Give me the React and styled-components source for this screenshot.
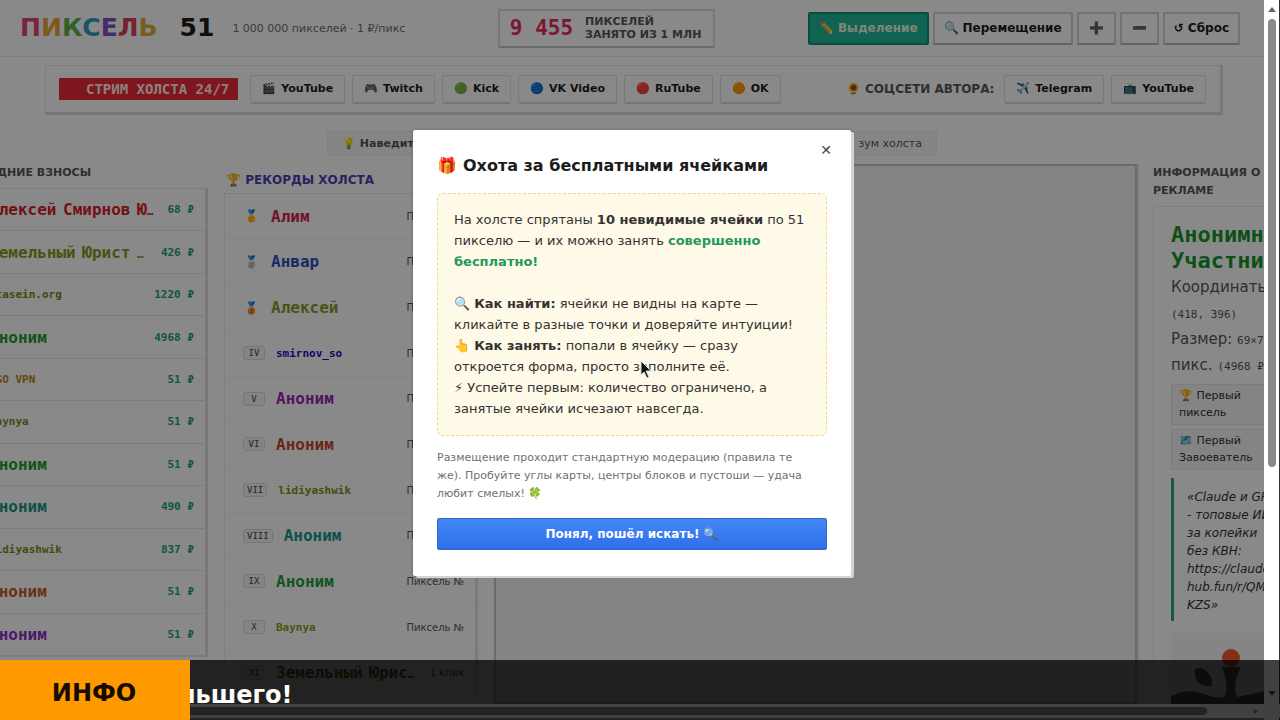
import React from "react";
import styled, { createGlobalStyle, css } from "styled-components";

const sans = '"DejaVu Sans", sans-serif';
const mono = '"DejaVu Sans Mono", monospace';

const GlobalStyle = createGlobalStyle`
  * { box-sizing: border-box; }
  body { margin: 0; font-family: ${sans}; color: #1c1c1c; background: #fafafa; }
  button, input { font-family: inherit; }
  h1, h2, h3, p, ul, ol { margin: 0; padding: 0; }
  ul, ol { list-style: none; }
`;

const Shell = styled.div`
  position: relative;
  display: flex;
  height: 100vh;
  overflow: hidden;
`;

const Page = styled.div`
  flex: 1;
  min-width: 0;
  height: 100%;
  overflow: hidden;
  background: #fafafa;
`;

/* ---------- header ---------- */
const Header = styled.header`
  display: flex;
  align-items: center;
  justify-content: space-between;
  height: 57px;
  padding: 0 24px 0 20px;
  border-bottom: 1px solid #e4e4e4;
`;
const Brand = styled.div`
  display: flex;
  align-items: center;
  gap: 18px;
  white-space: nowrap;
`;
const Logo = styled.h1`
  display: flex;
  gap: 22px;
  font-size: 25px;
  line-height: 30px;
  font-weight: 700;
`;
const Letter = styled.span`
  color: ${(p) => p.$color};
`;
const Tagline = styled.span`
  font-size: 11px;
  color: #6b6b6b;
`;
const Counter = styled.div`
  display: flex;
  align-items: center;
  gap: 12px;
  height: 39px;
  padding: 0 12px 0 10px;
  border: 2px solid #dadada;
  border-bottom-color: #c4c4c4;
  font-size: 11px;
  font-weight: 700;
  line-height: 13px;
  color: #555;
  white-space: nowrap;
`;
const CounterValue = styled.strong`
  font-family: ${mono};
  font-size: 21px;
  color: #e02b5c;
`;
const Tools = styled.div`
  display: flex;
  justify-content: flex-end;
  gap: 4px;
`;
const ToolButton = styled.button`
  display: flex;
  align-items: center;
  justify-content: center;
  gap: 4px;
  height: 33px;
  min-width: 39px;
  padding: 0 9px;
  border: 2px solid #cfcfcf;
  border-bottom-color: #b5b5b5;
  border-radius: 2px;
  background: #fafafa;
  color: #1c1c1c;
  font-size: 12px;
  font-weight: 700;
  white-space: nowrap;
  ${(p) =>
    p.$active &&
    css`
      background: #1fb594;
      border-color: #178a70;
      color: #e8f4dc;
    `}
`;

/* ---------- stream bar ---------- */
const StreamBar = styled.nav`
  display: flex;
  align-items: center;
  justify-content: space-between;
  height: 50px;
  margin: 8px 41px 0 45px;
  padding: 0 14px 0 13px;
  border: 1px solid #e6e6e6;
  border-right: 3px solid #dcdcdc;
  border-bottom: 3px solid #d4d4d4;
  white-space: nowrap;
`;
const LinkGroup = styled.div`
  display: flex;
  align-items: center;
  gap: 7px;
`;
const LiveBadge = styled.span`
  margin-right: 5px;
  padding: 0 9px 0 27px;
  background: #e62a35;
  color: #ffe9e4;
  font-family: ${mono};
  font-size: 14px;
  font-weight: 700;
  line-height: 22px;
`;
const ChipLink = styled.a`
  display: flex;
  align-items: center;
  gap: 5px;
  height: 29px;
  padding: 0 11px;
  border: 1px solid #dedede;
  border-bottom: 2px solid #d6d6d6;
  border-radius: 2px;
  color: #1c1c1c;
  font-size: 11px;
  font-weight: 700;
  text-decoration: none;
`;
const SocialLabel = styled.span`
  display: flex;
  align-items: center;
  gap: 4px;
  margin-right: 3px;
  font-size: 12px;
  font-weight: 700;
  color: #555;
`;

const Hint = styled.p`
  display: flex;
  align-items: center;
  justify-content: space-between;
  width: 610px;
  height: 25px;
  margin: 16px auto 0;
  padding: 0 14px 0 14px;
  border: 1px solid #ececec;
  background: #f3f3f3;
  font-size: 11px;
  color: #555;
`;

/* ---------- columns ---------- */
const Columns = styled.main`
  display: grid;
  grid-template-columns: 254px 254px 1fr 254px;
  align-items: start;
  gap: 16px;
  margin: 8px -143px 0 -46px;
`;
const ColumnTitle = styled.h2`
  padding: 0 0 6px;
  font-size: 11px;
  line-height: 18px;
  font-weight: 700;
  color: #555;
  white-space: pre-line;
`;
const RecordsTitle = styled(ColumnTitle)`
  padding: 7px 0 4px 2px;
  font-size: 12px;
  color: #4a3fb0;
`;
const Donations = styled.ul`
  display: grid;
  grid-auto-rows: 1fr;
  height: 469px;
  border: 1px solid #e6e6e6;
  border-right: 3px solid #dadada;
`;
const DonationRow = styled.li`
  display: flex;
  align-items: center;
  justify-content: space-between;
  padding: 0 11px 0 34px;
  border-bottom: 1px solid #e2e2e2;
  white-space: nowrap;
`;
const NameText = styled.span`
  font-family: ${mono};
  font-size: 11px;
  font-weight: 700;
  color: ${(p) => p.$color};
`;
const Cyrillic = styled.span`
  font-size: 16px;
`;
const Price = styled.span`
  font-family: ${mono};
  font-size: 11px;
  font-weight: 700;
  color: #1b9a84;
`;
const Records = styled.ol`
  display: grid;
  grid-template-columns: minmax(0, 1fr);
  grid-auto-rows: 1fr;
  height: 504px;
  border: 1px solid #e8e8e8;
  border-right: 3px solid #dedede;
`;
const RecordRow = styled.li`
  display: flex;
  align-items: center;
  padding: 0 11px 0 18px;
  border-bottom: 1px solid #f0f0f0;
  white-space: nowrap;
`;
const Medal = styled.span`
  display: flex;
  justify-content: center;
  width: 16px;
  margin-right: 12px;
  font-size: 12px;
`;
const Rank = styled.span`
  min-width: 22px;
  margin-right: 11px;
  padding: 0 3px;
  border: 1px solid #d8d8d8;
  border-radius: 3px;
  background: #f0f0f0;
  font-family: ${mono};
  font-size: 9px;
  line-height: 12px;
  text-align: center;
  color: #444;
`;
const Caption = styled.span`
  margin-left: auto;
  font-size: 10px;
  color: #555;
`;
const Canvas = styled.section`
  height: 540px;
  border: 2px solid #c2c2c2;
  background: #f0f0f0;
  box-shadow: 2px 0 0 #e0e0e0;
`;
const Info = styled.section`
  height: 506px;
  padding: 15px 17px 0;
  border: 1px solid #e6e6e6;
  overflow: hidden;
`;
const Member = styled.h3`
  font-family: ${mono};
  font-size: 22px;
  line-height: 26px;
  color: #17912a;
`;
const Facts = styled.div`
  margin-bottom: 6px;
  font-size: 15px;
  color: #555;
  white-space: nowrap;
`;
const Fact = styled.p`
  height: 26px;
  line-height: 26px;
`;
const MonoText = styled.span`
  font-family: ${mono};
  font-size: 11px;
`;
const Award = styled.div`
  width: 160px;
  height: 41px;
  margin-bottom: 4px;
  padding: 2px 7px;
  border: 1px solid #e2e2e2;
  background: #f0f0f0;
  font-size: 11px;
  line-height: 17px;
  color: #333;
`;
const Quote = styled.blockquote`
  margin: 8px 0 12px;
  padding: 10px 0 7px 13px;
  border-left: 3px solid #23a583;
  font-size: 12px;
  font-style: italic;
  line-height: 18px;
  color: #333;
  white-space: pre;
`;
const Plant = styled.svg`
  display: block;
  width: 100%;
  height: 72px;
  background: #f2f2f2;
`;

/* ---------- scroll rails ---------- */
const Rail = styled.div`
  display: flex;
  flex-direction: column;
  align-items: center;
  width: 16px;
  padding: 7px 0 24px;
  border-right: 1px solid #333;
  background: #fff;
`;
const RailThumb = styled.div`
  width: 8px;
  height: 65%;
  margin: 7px 0 auto;
  border-radius: 4px;
  background: #8a8a8a;
`;
const Arrow = styled.svg`
  flex: none;
  width: 8px;
  height: 5px;
  fill: ${(p) => p.$color || "#666"};
`;

/* ---------- modal ---------- */
const Backdrop = styled.div`
  position: absolute;
  inset: 0 16px 0 0;
  display: flex;
  align-items: flex-start;
  justify-content: center;
  padding-top: 130px;
  background: rgba(0, 0, 0, 0.45);
`;
const Dialog = styled.section`
  position: relative;
  width: 438px;
  padding: 24px 24px 26px;
  background: #fff;
  border-radius: 2px;
  box-shadow: 3px 2px 0 #d4d4d4, 0 0 3px rgba(0, 0, 0, 0.3);
`;
const CloseButton = styled.button`
  position: absolute;
  top: 10px;
  right: 15px;
  width: 20px;
  height: 20px;
  padding: 0;
  border: 0;
  background: none;
  font-size: 14px;
  line-height: 20px;
  color: #444;
`;
const DialogTitle = styled.h2`
  display: flex;
  align-items: center;
  gap: 6px;
  margin-bottom: 15px;
  font-size: 16px;
  line-height: 24px;
  white-space: nowrap;
`;
const Notice = styled.div`
  margin-bottom: 13px;
  padding: 15px 16px 16px;
  border: 1px dashed #f0d690;
  border-radius: 6px;
  background: #fff9e8;
  font-size: 13px;
  line-height: 21px;
  color: #333;
  white-space: nowrap;
`;
const Free = styled.strong`
  color: #1f9a59;
`;
const SmallPrint = styled.p`
  margin-bottom: 15px;
  font-size: 11px;
  line-height: 18px;
  color: #707070;
  white-space: nowrap;
`;
const ConfirmButton = styled.button`
  display: flex;
  align-items: center;
  justify-content: center;
  gap: 4px;
  width: 100%;
  height: 32px;
  border: 1px solid #3567c9;
  border-radius: 2px;
  background: linear-gradient(#4487f6, #2f6fe9);
  color: #fff;
  font-size: 12px;
  font-weight: 700;
`;

/* ---------- ticker ---------- */
const Ticker = styled.footer`
  position: absolute;
  inset: auto 0 0 0;
  display: flex;
  height: 60px;
  background: rgba(0, 0, 0, 0.75);
`;
const TickerLabel = styled.strong`
  z-index: 1;
  display: flex;
  flex: none;
  align-items: center;
  justify-content: center;
  width: 190px;
  padding: 6px 2px 0 0;
  background: #ff9900;
  color: #140c00;
  font-size: 24px;
`;
const TickerBody = styled.div`
  flex: 1;
  overflow: hidden;
`;
const TickerText = styled.p`
  height: 44px;
  margin-left: -12px;
  padding-top: 18px;
  color: #fff;
  font-size: 24px;
  font-weight: 700;
  line-height: 34px;
`;
const HorizontalRail = styled.div`
  display: flex;
  align-items: center;
  justify-content: space-between;
  height: 14px;
  padding-right: 20px;
  background: #414141;
`;
const HorizontalThumb = styled.div`
  width: 95%;
  height: 8px;
  border-radius: 0 4px 4px 0;
  background: #232323;
`;
const Pointer = styled.svg`
  position: absolute;
  left: 50%;
  top: 50%;
  width: 12px;
  height: 19px;
`;

const logoLetters = [
  ["П", "#e0407a"], ["И", "#e8a035"], ["К", "#5cae48"], ["С", "#2f9db8"],
  ["Е", "#8052c0"], ["Л", "#dc3a5c"], ["Ь", "#d6ae38"],
];
const streams = [
  ["🎬", "YouTube"], ["🎮", "Twitch"], ["🟢", "Kick"],
  ["🔵", "VK Video"], ["🔴", "RuTube"], ["🟠", "OK"],
];
const socials = [["✈️", "Telegram"], ["📺", "YouTube"]];
const donations = [
  ["Алексей Смирнов Ю…", "68 ₽", "#d0212a"],
  ["Земельный Юрист …", "426 ₽", "#7d9a24"],
  ["stasein.org", "1220 ₽", "#6f8a10"],
  ["Аноним", "4968 ₽", "#1c9a2c"],
  ["OGO VPN", "51 ₽", "#b8801c"],
  ["Baynya", "51 ₽", "#7f8a18"],
  ["Аноним", "51 ₽", "#1c9a2c"],
  ["Аноним", "490 ₽", "#16947c"],
  ["lidiyashwik", "837 ₽", "#7f8a18"],
  ["Аноним", "51 ₽", "#c0592a"],
  ["Аноним", "51 ₽", "#8a2cc4"],
];
const records = [
  ["🥇", "Алим", "#cf2146"], ["🥈", "Анвар", "#2f4bbd"], ["🥉", "Алексей", "#829a2c"],
  ["IV", "smirnov_so", "#1c10c0"], ["V", "Аноним", "#9a24b4"],
  ["VI", "Аноним", "#c0492a"], ["VII", "lidiyashwik", "#7f8a18"],
  ["VIII", "Аноним", "#16948c"], ["IX", "Аноним", "#1c9a3c"],
  ["X", "Baynya", "#8a9a10"], ["XI", "Земельный Юрис…", "#4c6a20", "1 клик"],
];

const Emoji = ({ children }) => <span aria-hidden="true">{children}</span>;

const Chip = ({ icon, label }) => (
  <ChipLink href="#">
    <Emoji>{icon}</Emoji>
    {label}
  </ChipLink>
);

/* Cyrillic runs are set larger than Latin letters, digits and dots. */
const Name = ({ color, children }) => (
  <NameText $color={color}>
    {children.split(/([А-Яа-яЁё]+)/).map((part, i) =>
      i % 2 ? <Cyrillic key={i}>{part}</Cyrillic> : part
    )}
  </NameText>
);

export default function App() {
  return (
    <Shell>
      <GlobalStyle />
      <Page>
        <Header>
          <Brand>
            <Logo>
              <span>
                {logoLetters.map(([char, color]) => (
                  <Letter key={char} $color={color}>{char}</Letter>
                ))}
              </span>
              <span>51</span>
            </Logo>
            <Tagline>1 000 000 пикселей · 1 ₽/пикс</Tagline>
          </Brand>
          <Counter>
            <CounterValue>9 455</CounterValue>
            <span>ПИКСЕЛЕЙ<br />ЗАНЯТО ИЗ 1 МЛН</span>
          </Counter>
          <Tools>
            <ToolButton $active><Emoji>✏️</Emoji>Выделение</ToolButton>
            <ToolButton><Emoji>🔍</Emoji>Перемещение</ToolButton>
            <ToolButton aria-label="Приблизить">➕</ToolButton>
            <ToolButton aria-label="Отдалить">➖</ToolButton>
            <ToolButton>↺ Сброс</ToolButton>
          </Tools>
        </Header>

        <StreamBar>
          <LinkGroup>
            <LiveBadge>СТРИМ ХОЛСТА 24/7</LiveBadge>
            {streams.map(([icon, label]) => <Chip key={label} icon={icon} label={label} />)}
          </LinkGroup>
          <LinkGroup>
            <SocialLabel><Emoji>🌻</Emoji>СОЦСЕТИ АВТОРА:</SocialLabel>
            {socials.map(([icon, label]) => <Chip key={label} icon={icon} label={label} />)}
          </LinkGroup>
        </StreamBar>

        <Hint>
          <b><Emoji>💡</Emoji> Наведите</b>
          <span>зум холста</span>
        </Hint>

        <Columns>
          <section>
            <ColumnTitle>ПОСЛЕДНИЕ ВЗНОСЫ</ColumnTitle>
            <Donations>
              {donations.map(([name, price, color], i) => (
                <DonationRow key={i}>
                  <Name color={color}>{name}</Name>
                  <Price>{price}</Price>
                </DonationRow>
              ))}
            </Donations>
          </section>

          <section>
            <RecordsTitle><Emoji>🏆</Emoji> РЕКОРДЫ ХОЛСТА</RecordsTitle>
            <Records>
              {records.map(([rank, name, color, caption], i) => (
                <RecordRow key={i}>
                  {i < 3 ? <Medal>{rank}</Medal> : <Rank>{rank}</Rank>}
                  <Name color={color}>{name}</Name>
                  <Caption>{caption || "Пиксель №"}</Caption>
                </RecordRow>
              ))}
            </Records>
          </section>

          <Canvas aria-label="Холст" />

          <section>
            <ColumnTitle>{"ИНФОРМАЦИЯ О\nРЕКЛАМЕ"}</ColumnTitle>
            <Info>
              <Member>Анонимный<br />Участник</Member>
              <Facts>
                <Fact>Координаты:</Fact>
                <Fact><MonoText>(418, 396)</MonoText></Fact>
                <Fact>Размер: <MonoText>69×72</MonoText></Fact>
                <Fact>пикс. <MonoText>(4968 ₽)</MonoText></Fact>
              </Facts>
              <Award><Emoji>🏆</Emoji> Первый<br />пиксель</Award>
              <Award><Emoji>🗺️</Emoji> Первый<br />Завоеватель</Award>
              <Quote>{"«Claude и GPT\n- топовые ИИ\nза копейки\nбез КВН:\nhttps://claude\nhub.fun/r/QM\nKZS»"}</Quote>
              <Plant viewBox="0 0 218 72" preserveAspectRatio="xMinYMin slice" aria-hidden="true">
                <circle cx="60" cy="25" r="9" fill="#f2552c" />
                <path d="M51 34c4 10 6 20 3 30-8 2-16-1-24-4-10-3-20-2-30 3v9h218V52c-50-4-112 2-152 12-4-10-1-20 4-30z" fill="#5a6052" />
                <path d="M24 36c9-3 18 4 17 17-10 2-19-5-17-17z" fill="#5a6052" />
              </Plant>
            </Info>
          </section>
        </Columns>
      </Page>

      <Rail>
        <Arrow viewBox="0 0 8 5"><path d="M0 5l4-5 4 5z" /></Arrow>
        <RailThumb />
        <Arrow viewBox="0 0 8 5"><path d="M0 0l4 5 4-5z" /></Arrow>
      </Rail>

      <Backdrop>
        <Dialog role="dialog" aria-modal="true" aria-labelledby="hunt-title">
          <CloseButton aria-label="Закрыть">✕</CloseButton>
          <DialogTitle id="hunt-title"><Emoji>🎁</Emoji>Охота за бесплатными ячейками</DialogTitle>
          <Notice>
            <p>
              На холсте спрятаны <b>10 невидимые ячейки</b> по 51<br />
              пикселю — и их можно занять <Free>совершенно<br />бесплатно!</Free>
            </p>
            <br />
            <p>
              <Emoji>🔍</Emoji> <b>Как найти:</b> ячейки не видны на карте —<br />
              кликайте в разные точки и доверяйте интуиции!
            </p>
            <p>
              <Emoji>👆</Emoji> <b>Как занять:</b> попали в ячейку — сразу<br />
              откроется форма, просто заполните её.
            </p>
            <p>
              ⚡ Успейте первым: количество ограничено, а<br />
              занятые ячейки исчезают навсегда.
            </p>
          </Notice>
          <SmallPrint>
            Размещение проходит стандартную модерацию (правила те<br />
            же). Пробуйте углы карты, центры блоков и пустоши — удача<br />
            любит смелых! <Emoji>🍀</Emoji>
          </SmallPrint>
          <ConfirmButton>Понял, пошёл искать! <Emoji>🔍</Emoji></ConfirmButton>
        </Dialog>
      </Backdrop>

      <Ticker>
        <TickerLabel>ИНФО</TickerLabel>
        <TickerBody>
          <TickerText>льшего!</TickerText>
          <HorizontalRail>
            <HorizontalThumb />
            <Arrow viewBox="0 0 8 5" $color="#222"><path d="M2 0l4 2.5L2 5z" /></Arrow>
          </HorizontalRail>
        </TickerBody>
      </Ticker>

      <Pointer viewBox="0 0 12 19" aria-hidden="true">
        <path d="M1 1v14l3-3 3 6 2-1-3-6h5z" fill="#111" stroke="#ddd" strokeWidth="1" />
      </Pointer>
    </Shell>
  );
}
